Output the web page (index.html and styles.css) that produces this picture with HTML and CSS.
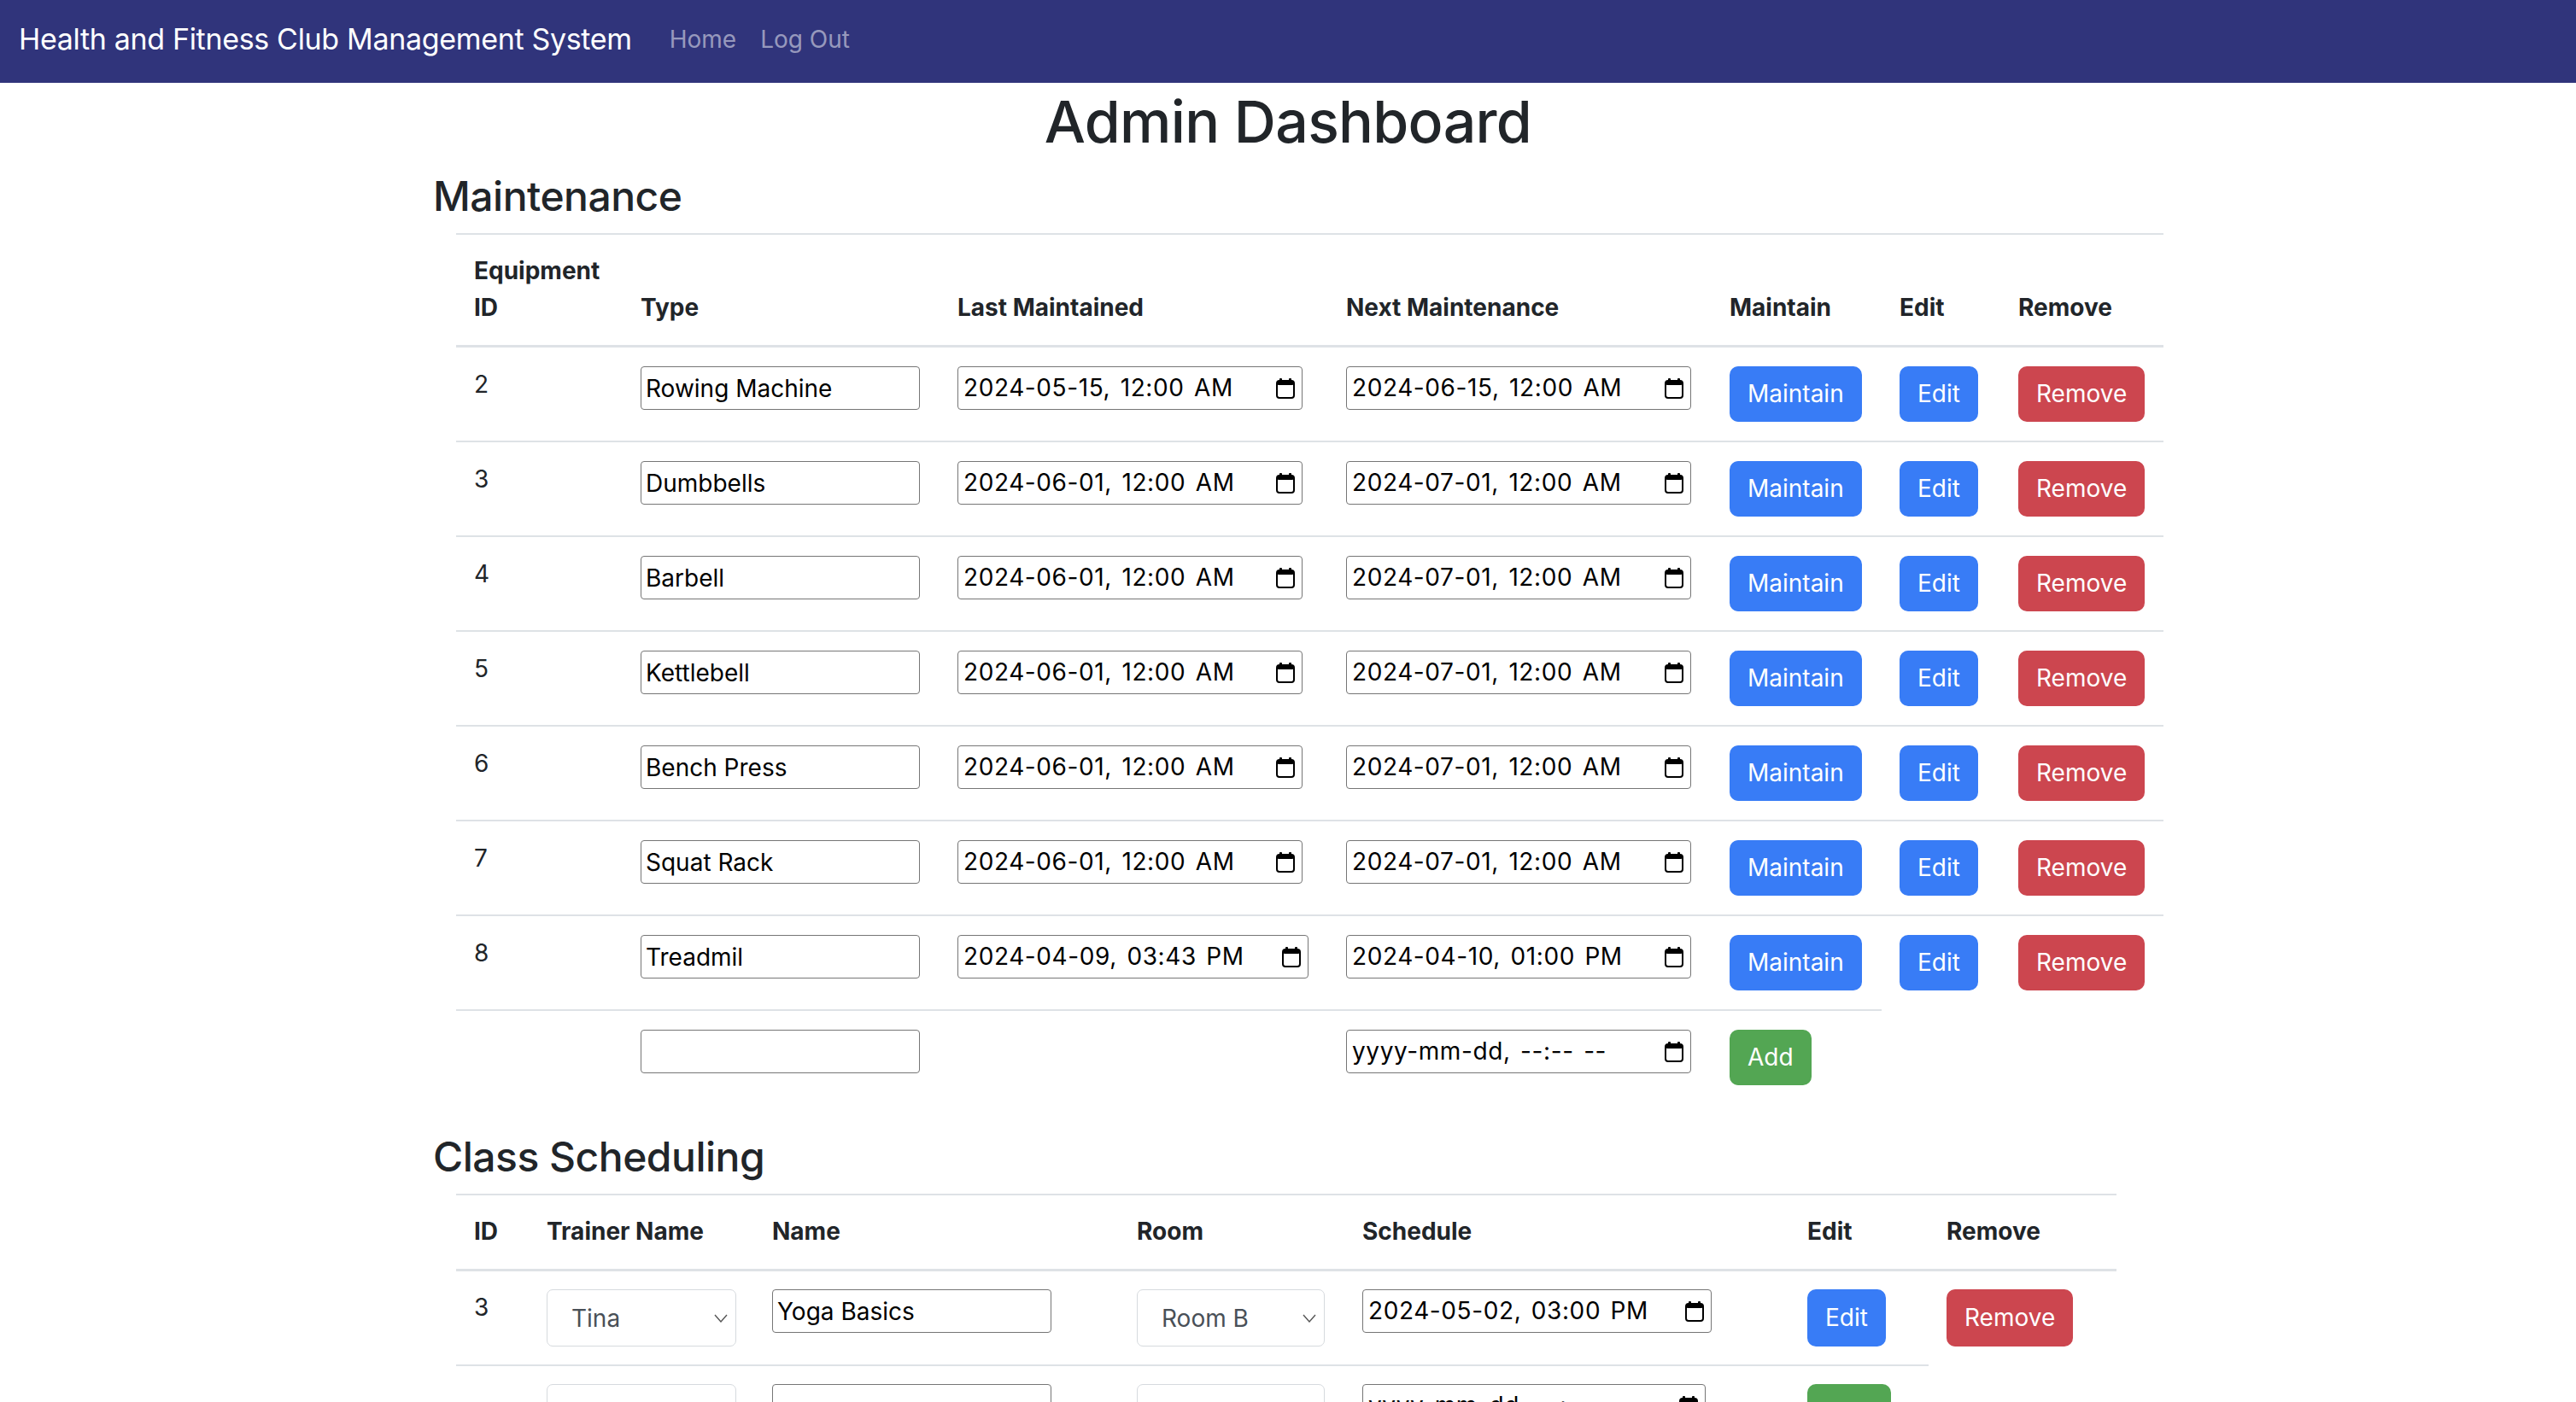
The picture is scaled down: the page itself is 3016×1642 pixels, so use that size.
FILE: index.html
```html
<!DOCTYPE html>
<html lang="en">
<head>
<meta charset="utf-8">
<title>Admin Dashboard</title>
<link rel="stylesheet" href="styles.css">
</head>
<body>
<nav class="navbar">
  <a class="brand" href="#">Health and Fitness Club Management System</a>
  <ul class="nav">
    <li><a class="nav-link" href="#">Home</a></li>
    <li><a class="nav-link" href="#">Log Out</a></li>
  </ul>
</nav>

<main class="container">
  <h1 class="page-title">Admin Dashboard</h1>

  <section class="section">
    <h2 class="section-title">Maintenance</h2>
    <table class="table table-equipment">
      <colgroup>
        <col class="c-id"><col class="c-type"><col class="c-last"><col class="c-next"><col class="c-maintain"><col class="c-edit"><col class="c-remove">
      </colgroup>
      <thead>
        <tr><th>Equipment ID</th><th>Type</th><th>Last Maintained</th><th>Next Maintenance</th><th>Maintain</th><th>Edit</th><th>Remove</th></tr>
      </thead>
      <tbody>
        <tr>
          <td>2</td>
          <td><input class="text-input" type="text" value="Rowing Machine"></td>
          <td><div class="date-input"><span class="date-text">2024-05-15, 12:00 AM</span><svg class="cal" viewBox="0 0 22 24"><rect x="4" y="0" width="3" height="5" rx="1"/><rect x="15" y="0" width="3" height="5" rx="1"/><rect x="1" y="3" width="20" height="20" rx="3" fill="none" stroke="#000" stroke-width="2"/><rect x="1" y="3" width="20" height="5" rx="2"/></svg></div></td>
          <td><div class="date-input"><span class="date-text">2024-06-15, 12:00 AM</span><svg class="cal" viewBox="0 0 22 24"><rect x="4" y="0" width="3" height="5" rx="1"/><rect x="15" y="0" width="3" height="5" rx="1"/><rect x="1" y="3" width="20" height="20" rx="3" fill="none" stroke="#000" stroke-width="2"/><rect x="1" y="3" width="20" height="5" rx="2"/></svg></div></td>
          <td><button class="btn btn-primary">Maintain</button></td>
          <td><button class="btn btn-primary">Edit</button></td>
          <td><button class="btn btn-danger">Remove</button></td>
        </tr>
        <tr>
          <td>3</td>
          <td><input class="text-input" type="text" value="Dumbbells"></td>
          <td><div class="date-input"><span class="date-text">2024-06-01, 12:00 AM</span><svg class="cal" viewBox="0 0 22 24"><rect x="4" y="0" width="3" height="5" rx="1"/><rect x="15" y="0" width="3" height="5" rx="1"/><rect x="1" y="3" width="20" height="20" rx="3" fill="none" stroke="#000" stroke-width="2"/><rect x="1" y="3" width="20" height="5" rx="2"/></svg></div></td>
          <td><div class="date-input"><span class="date-text">2024-07-01, 12:00 AM</span><svg class="cal" viewBox="0 0 22 24"><rect x="4" y="0" width="3" height="5" rx="1"/><rect x="15" y="0" width="3" height="5" rx="1"/><rect x="1" y="3" width="20" height="20" rx="3" fill="none" stroke="#000" stroke-width="2"/><rect x="1" y="3" width="20" height="5" rx="2"/></svg></div></td>
          <td><button class="btn btn-primary">Maintain</button></td>
          <td><button class="btn btn-primary">Edit</button></td>
          <td><button class="btn btn-danger">Remove</button></td>
        </tr>
        <tr>
          <td>4</td>
          <td><input class="text-input" type="text" value="Barbell"></td>
          <td><div class="date-input"><span class="date-text">2024-06-01, 12:00 AM</span><svg class="cal" viewBox="0 0 22 24"><rect x="4" y="0" width="3" height="5" rx="1"/><rect x="15" y="0" width="3" height="5" rx="1"/><rect x="1" y="3" width="20" height="20" rx="3" fill="none" stroke="#000" stroke-width="2"/><rect x="1" y="3" width="20" height="5" rx="2"/></svg></div></td>
          <td><div class="date-input"><span class="date-text">2024-07-01, 12:00 AM</span><svg class="cal" viewBox="0 0 22 24"><rect x="4" y="0" width="3" height="5" rx="1"/><rect x="15" y="0" width="3" height="5" rx="1"/><rect x="1" y="3" width="20" height="20" rx="3" fill="none" stroke="#000" stroke-width="2"/><rect x="1" y="3" width="20" height="5" rx="2"/></svg></div></td>
          <td><button class="btn btn-primary">Maintain</button></td>
          <td><button class="btn btn-primary">Edit</button></td>
          <td><button class="btn btn-danger">Remove</button></td>
        </tr>
        <tr>
          <td>5</td>
          <td><input class="text-input" type="text" value="Kettlebell"></td>
          <td><div class="date-input"><span class="date-text">2024-06-01, 12:00 AM</span><svg class="cal" viewBox="0 0 22 24"><rect x="4" y="0" width="3" height="5" rx="1"/><rect x="15" y="0" width="3" height="5" rx="1"/><rect x="1" y="3" width="20" height="20" rx="3" fill="none" stroke="#000" stroke-width="2"/><rect x="1" y="3" width="20" height="5" rx="2"/></svg></div></td>
          <td><div class="date-input"><span class="date-text">2024-07-01, 12:00 AM</span><svg class="cal" viewBox="0 0 22 24"><rect x="4" y="0" width="3" height="5" rx="1"/><rect x="15" y="0" width="3" height="5" rx="1"/><rect x="1" y="3" width="20" height="20" rx="3" fill="none" stroke="#000" stroke-width="2"/><rect x="1" y="3" width="20" height="5" rx="2"/></svg></div></td>
          <td><button class="btn btn-primary">Maintain</button></td>
          <td><button class="btn btn-primary">Edit</button></td>
          <td><button class="btn btn-danger">Remove</button></td>
        </tr>
        <tr>
          <td>6</td>
          <td><input class="text-input" type="text" value="Bench Press"></td>
          <td><div class="date-input"><span class="date-text">2024-06-01, 12:00 AM</span><svg class="cal" viewBox="0 0 22 24"><rect x="4" y="0" width="3" height="5" rx="1"/><rect x="15" y="0" width="3" height="5" rx="1"/><rect x="1" y="3" width="20" height="20" rx="3" fill="none" stroke="#000" stroke-width="2"/><rect x="1" y="3" width="20" height="5" rx="2"/></svg></div></td>
          <td><div class="date-input"><span class="date-text">2024-07-01, 12:00 AM</span><svg class="cal" viewBox="0 0 22 24"><rect x="4" y="0" width="3" height="5" rx="1"/><rect x="15" y="0" width="3" height="5" rx="1"/><rect x="1" y="3" width="20" height="20" rx="3" fill="none" stroke="#000" stroke-width="2"/><rect x="1" y="3" width="20" height="5" rx="2"/></svg></div></td>
          <td><button class="btn btn-primary">Maintain</button></td>
          <td><button class="btn btn-primary">Edit</button></td>
          <td><button class="btn btn-danger">Remove</button></td>
        </tr>
        <tr>
          <td>7</td>
          <td><input class="text-input" type="text" value="Squat Rack"></td>
          <td><div class="date-input"><span class="date-text">2024-06-01, 12:00 AM</span><svg class="cal" viewBox="0 0 22 24"><rect x="4" y="0" width="3" height="5" rx="1"/><rect x="15" y="0" width="3" height="5" rx="1"/><rect x="1" y="3" width="20" height="20" rx="3" fill="none" stroke="#000" stroke-width="2"/><rect x="1" y="3" width="20" height="5" rx="2"/></svg></div></td>
          <td><div class="date-input"><span class="date-text">2024-07-01, 12:00 AM</span><svg class="cal" viewBox="0 0 22 24"><rect x="4" y="0" width="3" height="5" rx="1"/><rect x="15" y="0" width="3" height="5" rx="1"/><rect x="1" y="3" width="20" height="20" rx="3" fill="none" stroke="#000" stroke-width="2"/><rect x="1" y="3" width="20" height="5" rx="2"/></svg></div></td>
          <td><button class="btn btn-primary">Maintain</button></td>
          <td><button class="btn btn-primary">Edit</button></td>
          <td><button class="btn btn-danger">Remove</button></td>
        </tr>
        <tr>
          <td>8</td>
          <td><input class="text-input" type="text" value="Treadmil"></td>
          <td><div class="date-input date-input-wide"><span class="date-text">2024-04-09, 03:43 PM</span><svg class="cal" viewBox="0 0 22 24"><rect x="4" y="0" width="3" height="5" rx="1"/><rect x="15" y="0" width="3" height="5" rx="1"/><rect x="1" y="3" width="20" height="20" rx="3" fill="none" stroke="#000" stroke-width="2"/><rect x="1" y="3" width="20" height="5" rx="2"/></svg></div></td>
          <td><div class="date-input"><span class="date-text">2024-04-10, 01:00 PM</span><svg class="cal" viewBox="0 0 22 24"><rect x="4" y="0" width="3" height="5" rx="1"/><rect x="15" y="0" width="3" height="5" rx="1"/><rect x="1" y="3" width="20" height="20" rx="3" fill="none" stroke="#000" stroke-width="2"/><rect x="1" y="3" width="20" height="5" rx="2"/></svg></div></td>
          <td><button class="btn btn-primary">Maintain</button></td>
          <td><button class="btn btn-primary">Edit</button></td>
          <td><button class="btn btn-danger">Remove</button></td>
        </tr>
        <tr class="add-row">
          <td></td>
          <td><input class="text-input" type="text" value=""></td>
          <td></td>
          <td><div class="date-input"><span class="date-text">yyyy-mm-dd, --:-- --</span><svg class="cal" viewBox="0 0 22 24"><rect x="4" y="0" width="3" height="5" rx="1"/><rect x="15" y="0" width="3" height="5" rx="1"/><rect x="1" y="3" width="20" height="20" rx="3" fill="none" stroke="#000" stroke-width="2"/><rect x="1" y="3" width="20" height="5" rx="2"/></svg></div></td>
          <td><button class="btn btn-success">Add</button></td>
        </tr>
      </tbody>
    </table>
  </section>

  <section class="section">
    <h2 class="section-title">Class Scheduling</h2>
    <table class="table table-classes">
      <colgroup>
        <col class="k-id"><col class="k-trainer"><col class="k-name"><col class="k-room"><col class="k-schedule"><col class="k-edit"><col class="k-remove">
      </colgroup>
      <thead>
        <tr><th>ID</th><th>Trainer Name</th><th>Name</th><th>Room</th><th>Schedule</th><th>Edit</th><th>Remove</th></tr>
      </thead>
      <tbody>
        <tr>
          <td>3</td>
          <td><div class="select-wrap select-trainer"><select class="form-select"><option>Tina</option></select><svg class="chev" viewBox="0 0 16 10"><polyline points="1,1 8,9 15,1"/></svg></div></td>
          <td><input class="text-input" type="text" value="Yoga Basics"></td>
          <td><div class="select-wrap select-room"><select class="form-select"><option>Room B</option></select><svg class="chev" viewBox="0 0 16 10"><polyline points="1,1 8,9 15,1"/></svg></div></td>
          <td><div class="date-input date-input-schedule"><span class="date-text">2024-05-02, 03:00 PM</span><svg class="cal" viewBox="0 0 22 24"><rect x="4" y="0" width="3" height="5" rx="1"/><rect x="15" y="0" width="3" height="5" rx="1"/><rect x="1" y="3" width="20" height="20" rx="3" fill="none" stroke="#000" stroke-width="2"/><rect x="1" y="3" width="20" height="5" rx="2"/></svg></div></td>
          <td><button class="btn btn-primary">Edit</button></td>
          <td><button class="btn btn-danger">Remove</button></td>
        </tr>
        <tr class="add-row">
          <td></td>
          <td><div class="select-wrap select-trainer"><select class="form-select"><option></option></select><svg class="chev" viewBox="0 0 16 10"><polyline points="1,1 8,9 15,1"/></svg></div></td>
          <td><input class="text-input" type="text" value=""></td>
          <td><div class="select-wrap select-room"><select class="form-select"><option></option></select><svg class="chev" viewBox="0 0 16 10"><polyline points="1,1 8,9 15,1"/></svg></div></td>
          <td><div class="date-input date-input-narrow"><span class="date-text">yyyy-mm-dd, --:-- --</span><svg class="cal" viewBox="0 0 22 24"><rect x="4" y="0" width="3" height="5" rx="1"/><rect x="15" y="0" width="3" height="5" rx="1"/><rect x="1" y="3" width="20" height="20" rx="3" fill="none" stroke="#000" stroke-width="2"/><rect x="1" y="3" width="20" height="5" rx="2"/></svg></div></td>
          <td><button class="btn btn-success btn-add-wide">Add</button></td>
        </tr>
      </tbody>
    </table>
  </section>
</main>
</body>
</html>
```

FILE: styles.css
```css
* {
  box-sizing: border-box;
}

html,
body {
  margin: 0;
}

body {
  font-family: Inter, "Liberation Sans", sans-serif;
  font-size: 28px;
  line-height: 42px;
  color: #212529;
  background: #fff;
}

/* ---------- navbar ---------- */
.navbar {
  display: flex;
  align-items: center;
  height: 97px;
  padding: 0 22px 5px;
  background: #30347b;
}

.brand {
  font-size: 34px;
  letter-spacing: -0.33px;
  line-height: 52px;
  color: #fff;
  text-decoration: none;
  white-space: nowrap;
  margin-right: 30px;
}

.nav {
  display: flex;
  list-style: none;
  margin: 0;
  padding: 0;
}

.nav-link {
  display: block;
  padding: 0 14px;
  font-size: 28px;
  line-height: 42px;
  color: rgba(255, 255, 255, 0.5);
  text-decoration: none;
}

/* ---------- page ---------- */
.container {
  width: 2002px;
  margin: 0 auto;
  padding-top: 4px;
}

.page-title {
  margin: 0 0 17px;
  text-align: center;
  font-size: 68px;
  letter-spacing: -0.7px;
  line-height: 83px;
  font-weight: 500;
}

.section-title {
  margin: 0 0 14px;
  font-size: 48px;
  letter-spacing: -0.5px;
  line-height: 58px;
  font-weight: 500;
}

/* ---------- tables ---------- */
.table {
  margin: 0 0 33px 27px;
  border-collapse: separate;
  border-spacing: 0;
  table-layout: fixed;
}

.table th {
  text-align: left;
  vertical-align: bottom;
  padding: 21px 21px 22px;
  line-height: 43px;
  font-weight: 700;
  border-top: 2px solid #dee2e6;
  border-bottom: 3px solid #dee2e6;
}

.table td {
  vertical-align: top;
  padding: 22px 21px;
  border-top: 2px solid #dee2e6;
}

.table tbody tr:first-child td {
  border-top: 0;
}

.table-equipment {
  width: 1999px;
}

.c-id { width: 195px; }
.c-type { width: 371px; }
.c-last { width: 455px; }
.c-next { width: 449px; }
.c-maintain { width: 199px; }
.c-edit { width: 139px; }
.c-remove { width: 191px; }

.table-classes {
  width: 1944px;
}

.table-classes td {
  padding: 21px;
}

.k-id { width: 85px; }
.k-trainer { width: 264px; }
.k-name { width: 427px; }
.k-room { width: 264px; }
.k-schedule { width: 521px; }
.k-edit { width: 163px; }
.k-remove { width: 220px; }

/* ---------- form controls ---------- */
.text-input {
  display: block;
  width: 327px;
  height: 51px;
  margin: 0;
  padding: 0 5px;
  border: 1px solid #767676;
  border-radius: 4px;
  font-family: inherit;
  font-size: 28px;
  color: #000;
  background: #fff;
}

.date-input {
  display: flex;
  align-items: center;
  justify-content: space-between;
  width: 404px;
  height: 51px;
  padding: 0 8px 0 6px;
  border: 1px solid #767676;
  border-radius: 4px;
  color: #000;
  background: #fff;
}

.date-input-wide { width: 411px; }
.date-input-schedule { width: 409px; }
.date-input-narrow { width: 402px; }

.date-text {
  font-size: 28px;
  line-height: 49px;
  white-space: nowrap;
  letter-spacing: 0.6px;
  word-spacing: 3px;
}

.cal {
  flex: none;
  width: 22px;
  height: 24px;
  fill: #000;
}

.select-wrap {
  position: relative;
  height: 67px;
}

.select-trainer { width: 222px; }
.select-room { width: 220px; }

.form-select {
  display: block;
  width: 100%;
  height: 67px;
  margin: 0;
  padding: 0 40px 0 28px;
  border: 1px solid #d6dade;
  border-radius: 7px;
  background: #fff;
  font-family: inherit;
  font-size: 28px;
  color: #495057;
  appearance: none;
  -webkit-appearance: none;
}

.chev {
  position: absolute;
  right: 10px;
  top: 29px;
  width: 16px;
  height: 10px;
  fill: none;
  stroke: #555;
  stroke-width: 1.4;
  pointer-events: none;
}

/* ---------- buttons ---------- */
.btn {
  display: block;
  height: 65px;
  margin: 0;
  padding: 0 21px;
  border: 0;
  border-radius: 10px;
  font-family: inherit;
  font-size: 28px;
  line-height: 65px;
  color: #fff;
  white-space: nowrap;
}

.table-classes .btn {
  height: 67px;
  line-height: 67px;
}

.btn-primary { background: #387cf6; }
.btn-danger { background: #cc464f; }
.btn-success { background: #53a653; }
.btn-add-wide { padding: 0 22px; }
```
